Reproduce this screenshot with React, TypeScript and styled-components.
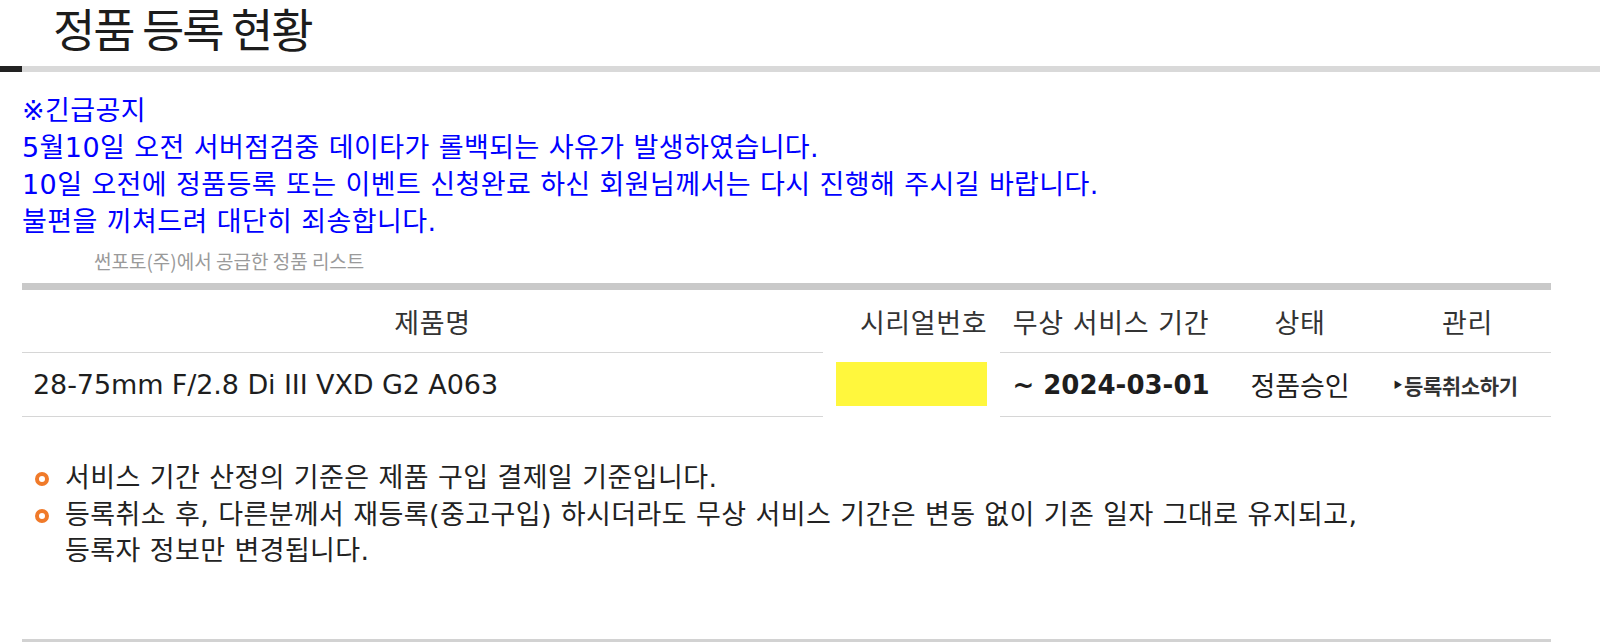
import React from "react";
import styled, { createGlobalStyle } from "styled-components";

const GlobalStyle = createGlobalStyle`
  html, body {
    margin: 0;
    padding: 0;
    background: #ffffff;
  }
  body {
    font-family: "DejaVu Sans", "Noto Sans CJK KR", sans-serif;
    color: #222;
  }
`;

const Page = styled.div`
  width: 1600px;
  height: 643px;
  overflow: hidden;
  position: relative;
`;

const TitleBar = styled.h2`
  margin: 0;
  height: 66px;
  box-sizing: border-box;
  padding: 2px 0 0 53px;
  font-family: "Noto Sans CJK KR", sans-serif;
  font-size: 46px;
  font-weight: 400;
  line-height: 50px;
  letter-spacing: -2px;
  color: #1c1c1c;
`;

const Rule = styled.div`
  height: 6px;
  background: linear-gradient(to right, #222 0 22px, #d9d9d9 22px);
`;

const Notice = styled.div`
  padding: 20px 0 0 22px;
  font-size: 27px;
  line-height: 37px;
  letter-spacing: 0.4px;
  color: #0000ff;
`;

const Caption = styled.div`
  margin: 9px 0 10px 94px;
  font-family: "Noto Sans CJK KR", sans-serif;
  font-size: 19px;
  line-height: 24px;
  letter-spacing: 0;
  color: #9a9a9a;
`;

const Table = styled.div`
  margin: 0 0 0 22px;
  width: 1529px;
  border-top: 7px solid #c9c9c9;
  display: grid;
  grid-template-columns: 801px 177px 222px 156px 173px;
`;

const Cell = styled.div<{ $head?: boolean; $plain?: boolean; $shift?: number; $align?: string }>`
  height: ${(p) => (p.$head ? 63 : 64)}px;
  border-bottom: 1px solid ${(p) => (p.$plain ? "transparent" : "#d6d6d6")};
  display: flex;
  align-items: center;
  justify-content: ${(p) => p.$align || "center"};
  padding-left: ${(p) => (p.$shift && p.$shift > 0 ? p.$shift : 0)}px;
  padding-right: ${(p) => (p.$shift && p.$shift < 0 ? -p.$shift : 0)}px;
  box-sizing: border-box;
  font-size: 27px;
  letter-spacing: ${(p) => (p.$head ? "0.6px" : "-0.1px")};
  color: ${(p) => (p.$head ? "#333" : "#1e1e1e")};
  white-space: nowrap;
`;

const Serial = styled.div`
  width: 151px;
  height: 44px;
  background: #fff73d;
  margin-left: 13px;
  margin-top: -2px;
`;

const DateText = styled.span`
  font-size: 26px;
  font-weight: 700;
  letter-spacing: 0;
`;

const CancelLink = styled.a`
  font-family: "Noto Sans CJK KR", sans-serif;
  font-size: 21px;
  font-weight: 700;
  letter-spacing: -0.4px;
  color: #333;
  text-decoration: none;
  display: flex;
  align-items: center;
  gap: 2px;
`;

const Arrow = styled.span`
  font-size: 9px;
  color: #222;
`;

const Notes = styled.ul`
  list-style: none;
  margin: 43px 0 0;
  padding: 0 0 0 35px;
  font-size: 27px;
  line-height: 36.5px;
  letter-spacing: 0.4px;
  color: #222;
`;

const NoteItem = styled.li`
  display: flex;
  align-items: flex-start;
  gap: 16px;
`;

const Ring = styled.span`
  flex: none;
  width: 14px;
  height: 14px;
  margin-top: 12px;
  border: 4px solid #f07a2a;
  border-radius: 50%;
  box-sizing: border-box;
`;

const BottomLine = styled.div`
  margin: 69px 0 0 22px;
  width: 1529px;
  height: 3px;
  background: #d2d2d2;
`;

export default function App() {
  return (
    <>
      <GlobalStyle />
      <Page>
        <TitleBar>정품 등록 현황</TitleBar>
        <Rule />
        <Notice>
          ※긴급공지
          <br />
          5월10일 오전 서버점검중 데이타가 롤백되는 사유가 발생하였습니다.
          <br />
          10일 오전에 정품등록 또는 이벤트 신청완료 하신 회원님께서는 다시 진행해 주시길 바랍니다.
          <br />
          불편을 끼쳐드려 대단히 죄송합니다.
        </Notice>
        <Caption>썬포토(주)에서 공급한 정품 리스트</Caption>
        <Table>
          <Cell $head $shift={20}>제품명</Cell>
          <Cell $head $plain $shift={24}>시리얼번호</Cell>
          <Cell $head>무상 서비스 기간</Cell>
          <Cell $head>상태</Cell>
          <Cell $head $shift={6}>관리</Cell>

          <Cell $align="flex-start" $shift={11}>28-75mm F/2.8 Di III VXD G2 A063</Cell>
          <Cell $plain $align="flex-start">
            <Serial />
          </Cell>
          <Cell>
            <DateText>~ 2024-03-01</DateText>
          </Cell>
          <Cell>정품승인</Cell>
          <Cell $shift={-18}>
            <CancelLink href="#">
              <Arrow>▶</Arrow>등록취소하기
            </CancelLink>
          </Cell>
        </Table>
        <Notes>
          <NoteItem>
            <Ring />
            <span>서비스 기간 산정의 기준은 제품 구입 결제일 기준입니다.</span>
          </NoteItem>
          <NoteItem>
            <Ring />
            <span>
              등록취소 후, 다른분께서 재등록(중고구입) 하시더라도 무상 서비스 기간은 변동 없이 기존 일자 그대로 유지되고,
              <br />
              등록자 정보만 변경됩니다.
            </span>
          </NoteItem>
        </Notes>
        <BottomLine />
      </Page>
    </>
  );
}
